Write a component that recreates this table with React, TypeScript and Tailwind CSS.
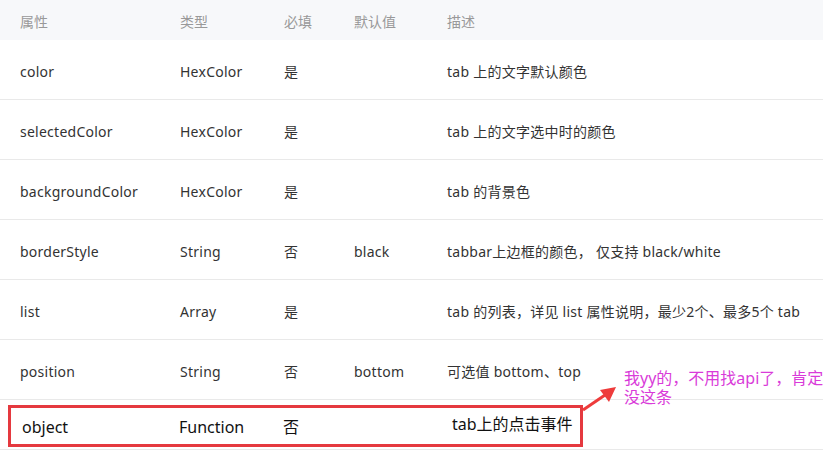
const rows = [
  { name: "color", type: "HexColor", req: "是", def: "", desc: "tab 上的文字默认颜色" },
  { name: "selectedColor", type: "HexColor", req: "是", def: "", desc: "tab 上的文字选中时的颜色" },
  { name: "backgroundColor", type: "HexColor", req: "是", def: "", desc: "tab 的背景色" },
  { name: "borderStyle", type: "String", req: "否", def: "black", desc: "tabbar上边框的颜色， 仅支持 black/white" },
  { name: "list", type: "Array", req: "是", def: "", desc: "tab 的列表，详见 list 属性说明，最少2个、最多5个 tab" },
  { name: "position", type: "String", req: "否", def: "bottom", desc: "可选值 bottom、top" },
];

const font = { fontFamily: '"Noto Sans", "Noto Sans CJK SC", sans-serif' };

export default function App() {
  return (
    <div className="relative h-[450px] w-[823px] overflow-hidden bg-white" style={font}>
      <div className="grid h-[40px] grid-cols-[160px_104px_70px_93px_1fr] items-center bg-[#f7f8fa] pt-[2px] text-[14px] text-[#999]">
        <div className="px-5">属性</div>
        <div className="px-5">类型</div>
        <div className="px-5">必填</div>
        <div className="px-5">默认值</div>
        <div className="px-5">描述</div>
      </div>

      {rows.map((r) => (
        <div
          key={r.name}
          className="grid h-[60px] grid-cols-[160px_104px_70px_93px_1fr] items-center border-b border-[#e9e9e9] pt-[3px] text-[14px] tracking-[0.25px] text-[#333]"
        >
          <div className="px-5">{r.name}</div>
          <div className="px-5">{r.type}</div>
          <div className="px-5">{r.req}</div>
          <div className="px-5">{r.def}</div>
          <div className="whitespace-nowrap px-5">{r.desc}</div>
        </div>
      ))}

      {/* pasted row with the red frame */}
      <div className="relative grid h-[50px] grid-cols-[160px_104px_70px_93px_1fr] items-center border-b border-[#e9e9e9] text-[16px] text-[#111]">
        <div className="mt-[4px] pl-[22px]">object</div>
        <div className="mt-[4px] pl-[19px]">Function</div>
        <div className="mt-[4px] pl-[19px]">否</div>
        <div />
        <div className="-mt-[2px] pl-[25px]">tab上的点击事件</div>
        <div className="absolute left-[8px] top-[5px] h-[42px] w-[575px] border-[3px] border-[#e5393f]" />
      </div>

      <svg className="absolute left-[578px] top-[380px]" width="44" height="34" viewBox="0 0 44 34">
        <line x1="5" y1="30" x2="30" y2="13" stroke="#ee3b3b" strokeWidth="3" />
        <polygon points="38,7 22,10 31,22" fill="#ee3b3b" />
      </svg>

      <div className="absolute left-[624px] top-[369px] flex flex-col whitespace-nowrap text-[16px] leading-[19px] text-[#d93bd9]">
        <span>我yy的，不用找api了，肯定</span>
        <span>没这条</span>
      </div>
    </div>
  );
}
